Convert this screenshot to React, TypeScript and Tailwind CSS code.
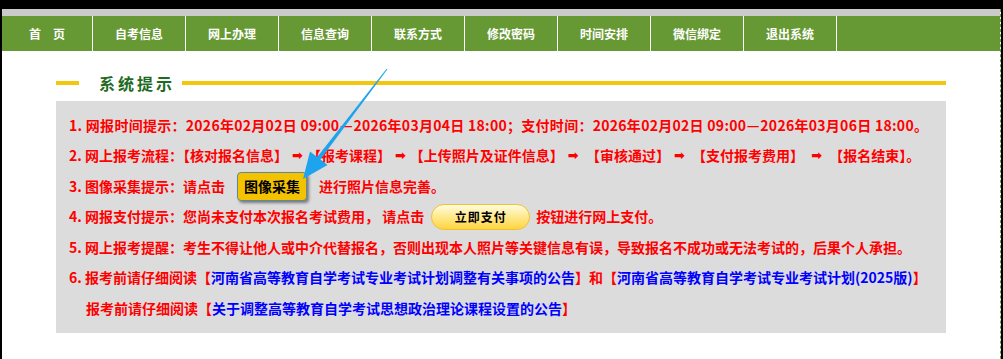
import React from "react";

const navItems = ["首　页", "自考信息", "网上办理", "信息查询", "联系方式", "修改密码", "时间安排", "微信绑定", "退出系统"];

const Arrow = () => <span className="px-[4px] font-['DejaVu_Sans',sans-serif] text-[13px]">➡</span>;

// full-width dash, as the reference font draws it
const Dash = () => <span className="inline-block w-[14px] text-center">—</span>;

const SectionTitle = ({ title }: { title: string }) => (
  <div className="flex items-center h-[24px]">
    <div className="w-[23px] h-[4px] bg-[#f4c70f]" />
    <span className="ml-[20px] text-[16px] font-bold tracking-[3px] text-[#1f6b1f] leading-none">{title}</span>
    <div className="flex-1 ml-[7px] h-[4px] bg-[#f4c70f]" />
  </div>
);

const Link = ({ children }: { children: React.ReactNode }) => (
  <>
    <span className="text-[#ff0000]">【</span>
    <span className="text-[#0000ff]">{children}</span>
    <span className="text-[#ff0000]">】</span>
  </>
);

const App = () => {
  return (
    <div className="relative h-[359px] overflow-hidden bg-black pt-[9px] pl-[2px] pr-[2px] font-['Noto_Sans_CJK_SC',sans-serif]">
      <div className="h-[400px] bg-white border-r border-dashed border-[#6a9a3a]">
        {/* Nav */}
        <div className="h-[7px] bg-[#cbcbcb]" />
        <nav className="flex h-[35px] bg-[#669933]">
          {navItems.map((item, i) => (
            <div
              key={item}
              className={`${i === 0 ? "w-[91px]" : "w-[93px]"} flex items-center justify-center border-r border-white text-[12px] font-bold text-white`}
            >
              {item}
            </div>
          ))}
          <div className="flex-1" />
        </nav>

        {/* Main Content */}
        <div className="mx-auto w-[890px]">
          <div className="mt-[20px]">
            <SectionTitle title="系统提示" />
          </div>

          <div className="mt-[6px] bg-[#dcdcdc] pl-[13px] py-[9px] text-[14px] font-bold text-[#ff0000]">
            <div className="flex items-center h-[30.5px] whitespace-nowrap tracking-[0.28px]">
              1. 网报时间提示：2026年02月02日 09:00<Dash />2026年03月04日 18:00；支付时间：2026年02月02日 09:00<Dash />2026年03月06日 18:00。
            </div>
            <div className="flex items-center h-[30.5px] whitespace-nowrap">
              2. 网上报考流程：【核对报名信息】<Arrow />【报考课程】<Arrow />【上传照片及证件信息】<Arrow />&nbsp;【审核通过】<Arrow />&nbsp;【支付报考费用】&nbsp;<Arrow />&nbsp;【报名结束】。
            </div>
            <div className="flex items-center h-[30.5px] whitespace-nowrap">
              3. 图像采集提示：请点击
              <span className="ml-[12px] mr-[12px] flex h-[29px] w-[70px] items-center justify-center rounded-[4px] border border-[#5d8aa0] bg-[#f3c300] text-[14px] text-black shadow-[2px_2px_3px_rgba(0,0,0,0.45)]">
                图像采集
              </span>
              进行照片信息完善。
            </div>
            <div className="flex items-center h-[30.5px] whitespace-nowrap">
              4. 网报支付提示：您尚未支付本次报名考试费用， 请点击
              <span className="ml-[7px] mr-[6px] flex h-[26px] w-[99px] items-center justify-center rounded-full border border-[#f0c232] bg-gradient-to-b from-[#fffbe0] via-[#ffe98a] to-[#ffd43a] text-[12px] tracking-[1px] text-black">
                立即支付
              </span>
              按钮进行网上支付。
            </div>
            <div className="flex items-center h-[30.5px] whitespace-nowrap">
              5. 网上报考提醒：考生不得让他人或中介代替报名，否则出现本人照片等关键信息有误，导致报名不成功或无法考试的，后果个人承担。
            </div>
            <div className="flex items-center h-[30.5px] whitespace-nowrap">
              6. 报考前请仔细阅读<Link>河南省高等教育自学考试专业考试计划调整有关事项的公告</Link>和<Link>河南省高等教育自学考试专业考试计划(2025版)</Link>
            </div>
            <div className="flex items-center h-[30.5px] whitespace-nowrap pl-[17px]">
              报考前请仔细阅读<Link>关于调整高等教育自学考试思想政治理论课程设置的公告</Link>
            </div>
          </div>

          <div className="mt-[22px]">
            <SectionTitle title="信息中心" />
          </div>
        </div>
      </div>

      {/* Annotation arrow */}
      <svg className="pointer-events-none absolute left-0 top-0" width="1003" height="359">
        <polygon
          points="387.4,69.3 320.4,159.5 327.5,165 303,179 310,151.6 317.2,157.1 386.6,68.7"
          fill="#1ea3ef"
        />
      </svg>
    </div>
  );
};

export default App;
